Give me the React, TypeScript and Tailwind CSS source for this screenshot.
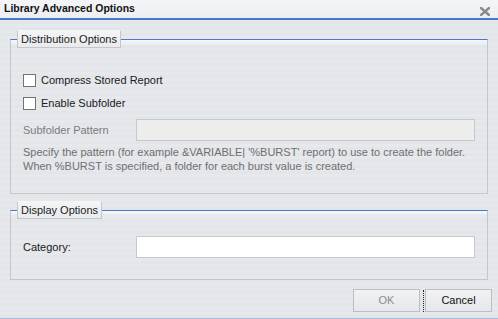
const font = "font-['Liberation_Sans',Arial,sans-serif]";

const Fieldset = ({ title, children, className }: { title: string; children: React.ReactNode; className?: string }) => (
  <fieldset
    className={`mx-[10px] border border-[#c4c6c9] border-t-[#4a77c7] bg-[linear-gradient(to_bottom,#f7f8f9,rgba(247,248,249,0)_6px)] px-[12px] ${className ?? ""}`}
  >
    <legend className="-ml-[6px] h-[18px] border border-[#c4c6c9] border-t-[#f4f5f7] bg-[linear-gradient(to_bottom,#f4f5f7,#e8eaed)] px-[3px] text-[11px] leading-[16px] text-[#1b1b1b]">
      {title}
    </legend>
    {children}
  </fieldset>
);

const Checkbox = ({ label, className }: { label: string; className?: string }) => (
  <label className={`flex h-[13px] items-center gap-[5px] ${className ?? ""}`}>
    <span className="h-[13px] w-[13px] shrink-0 border border-[#727272] bg-white" />
    <span className="text-[11px] leading-[13px] text-[#1b1b1b]">{label}</span>
  </label>
);

export default function App() {
  return (
    <div
      className={`${font} flex h-[319px] w-[498px] flex-col overflow-hidden border-b border-b-[#a9bcd9] bg-[repeating-linear-gradient(to_bottom,#e6e8ec_0px,#e6e8ec_3px,#e2e5e9_3px,#e2e5e9_6px)]`}
    >
      {/* title bar */}
      <div className="flex h-[20px] shrink-0 items-start justify-between border-b-2 border-b-[#4a77c7] bg-[linear-gradient(to_bottom,#f4f5f7,#eceef1)] pl-[4px] pr-[8px]">
        <span className="pt-[2px] text-[10.5px] font-bold leading-[13px] text-[#111]">Library Advanced Options</span>
        <svg width="10" height="9" viewBox="0 0 10 9" className="mt-[7px]">
          <path d="M1 1 L9 8 M9 1 L1 8" stroke="#8a8a8a" strokeWidth="2.4" strokeLinecap="square" />
        </svg>
      </div>

      <Fieldset title="Distribution Options" className="mt-[10px] pb-[20px]">
        <Checkbox label="Compress Stored Report" className="mt-[26px]" />
        <Checkbox label="Enable Subfolder" className="mt-[10px]" />
        <div className="mt-[9px] flex h-[22px] items-center">
          <span className="w-[113px] shrink-0 text-[11px] text-[#7c7c7c]">Subfolder Pattern</span>
          <div className="h-[22px] flex-1 border border-[#c6c8ca] bg-[#ededed]" />
        </div>
        <p className="mt-[4px] text-[11px] leading-[14px] text-[#6f6f6f]">
          Specify the pattern (for example &amp;VARIABLE| '%BURST' report) to use to create the folder.
          <br />
          When %BURST is specified, a folder for each burst value is created.
        </p>
      </Fieldset>

      <Fieldset title="Display Options" className="mt-[7px] pb-[21px]">
        <div className="mt-[17px] flex h-[22px] items-center">
          <span className="w-[113px] shrink-0 text-[11px] text-[#1b1b1b]">Category:</span>
          <div className="h-[22px] flex-1 border border-[#c6c8ca] bg-white" />
        </div>
      </Fieldset>

      <div className="mt-[9px] flex justify-end pr-[6px]">
        <button className="h-[23px] w-[67px] border border-[#bcbec1] bg-[linear-gradient(to_bottom,#f1f2f4,#e5e7ea)] text-[11px] text-[#8c8c8c]">
          OK
        </button>
        <div className="ml-[3px] mr-[1px] mt-[1px] h-[22px] border-l border-dotted border-l-[#222]" />
        <button className="h-[23px] w-[67px] border border-[#bcbec1] bg-[linear-gradient(to_bottom,#f1f2f4,#e5e7ea)] text-[11px] text-[#111]">
          Cancel
        </button>
      </div>
    </div>
  );
}
